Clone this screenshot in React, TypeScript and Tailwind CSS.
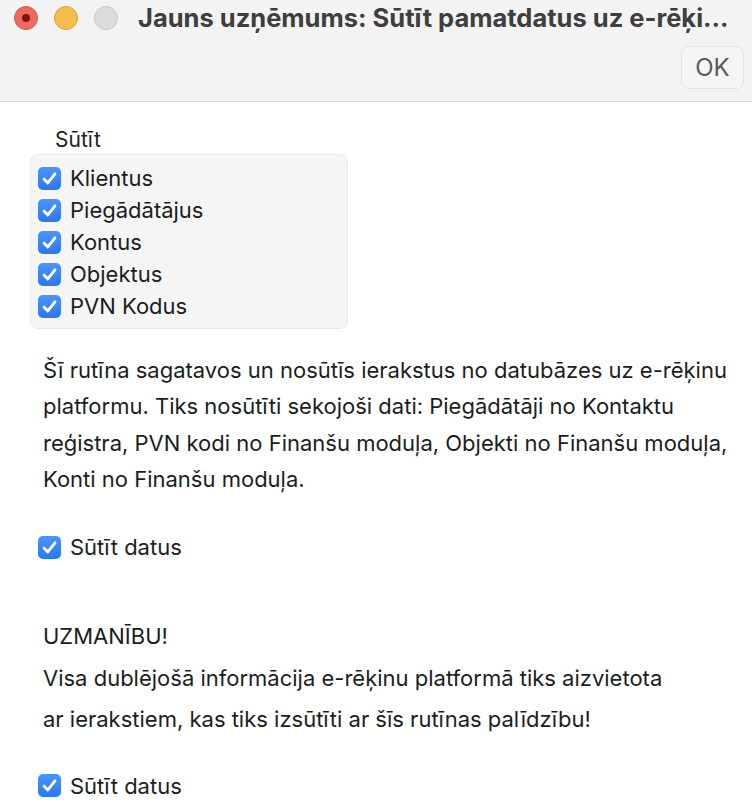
import React from 'react';

const items = ['Klientus', 'Piegādātājus', 'Kontus', 'Objektus', 'PVN Kodus'];

const CheckBox: React.FC = () => (
  <span className="flex h-[23px] w-[23px] shrink-0 items-center justify-center rounded-[5px] bg-gradient-to-b from-[#4a95f8] to-[#2a78f0]">
    <svg width="17" height="17" viewBox="0 0 17 17" fill="none">
      <path d="M3 9 L6.8 12.9 L14 3.8" stroke="white" strokeWidth="2.8" strokeLinecap="round" strokeLinejoin="round" />
    </svg>
  </span>
);

const CheckRow: React.FC<{ label: string }> = ({ label }) => (
  <div className="flex h-[32px] items-center gap-[9px]">
    <CheckBox />
    <span className="text-[22px] leading-none text-[#1d1d1d]">{label}</span>
  </div>
);

export default function App() {
  return (
    <div className="h-[804px] w-[752px] overflow-hidden bg-white font-['Inter','Liberation_Sans',sans-serif]">
      {/* title bar */}
      <div className="h-[102px] border-b border-[#dadada] bg-[#f3f3f3]">
        <div className="flex h-[36px] items-center pl-[14px]">
          <div className="flex gap-[16px]">
            <span className="flex h-[24px] w-[24px] items-center justify-center rounded-full border border-[#d8574c] bg-[#ee6a5f]">
              <span className="h-[8px] w-[8px] rounded-full bg-[#7c1410]" />
            </span>
            <span className="h-[24px] w-[24px] rounded-full border border-[#dea23e] bg-[#f5be4f]" />
            <span className="h-[24px] w-[24px] rounded-full border border-[#c9c9c9] bg-[#dcdcdc]" />
          </div>
          <span className="ml-[20px] whitespace-nowrap text-[25.5px] font-bold text-[#3e3e3e]">
            Jauns uzņēmums: Sūtīt pamatdatus uz e-rēķi...
          </span>
        </div>
        <div className="mt-[10px] flex justify-end pr-[8px]">
          <button className="flex h-[43px] w-[63px] items-center justify-center rounded-[8px] border border-[#e2e2e2] bg-[#f5f5f5] text-[24px] text-[#5a5a5a]">
            OK
          </button>
        </div>
      </div>

      {/* content */}
      <div className="pl-[30px] text-[#1d1d1d]">
        <div className="mt-[26px] pl-[25px] text-[21px] leading-[24px]">Sūtīt</div>
        <div className="mt-[2px] w-[318px] rounded-[8px] border border-[#e9e9e9] bg-[#f5f5f5] pb-[6px] pl-[7px] pt-[7px]">
          {items.map((item) => (
            <CheckRow key={item} label={item} />
          ))}
        </div>

        <p className="mt-[23px] whitespace-nowrap pl-[13px] text-[22px] leading-[36.3px]">
          Šī rutīna sagatavos un nosūtīs ierakstus no datubāzes uz e-rēķinu
          <br />
          platformu. Tiks nosūtīti sekojoši dati: Piegādātāji no Kontaktu
          <br />
          reģistra, PVN kodi no Finanšu moduļa, Objekti no Finanšu moduļa,
          <br />
          Konti no Finanšu moduļa.
        </p>

        <div className="mt-[34px] pl-[8px]">
          <CheckRow label="Sūtīt datus" />
        </div>

        <p className="mt-[53px] whitespace-nowrap pl-[13px] text-[22px] leading-[41.5px]">
          UZMANĪBU!
          <br />
          Visa dublējošā informācija e-rēķinu platformā tiks aizvietota
          <br />
          ar ierakstiem, kas tiks izsūtīti ar šīs rutīnas palīdzību!
        </p>

        <div className="mt-[29px] pl-[8px]">
          <CheckRow label="Sūtīt datus" />
        </div>
      </div>
    </div>
  );
}
